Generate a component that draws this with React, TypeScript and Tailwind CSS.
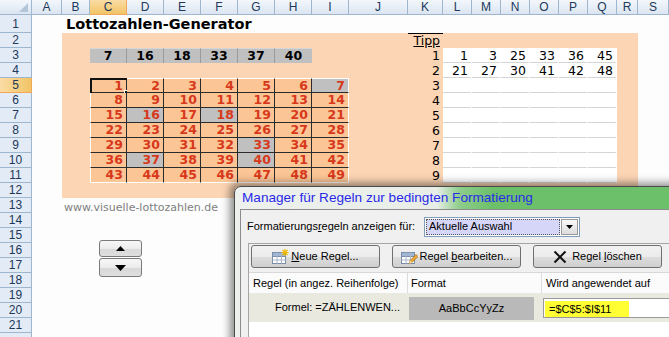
import React from "react";

const colHeads: [string, string][] = [
  ["A", "w-[30px]"],
  ["B", "w-[28px]"],
  ["C", "w-[37px]"],
  ["D", "w-[37px]"],
  ["E", "w-[37px]"],
  ["F", "w-[37px]"],
  ["G", "w-[37px]"],
  ["H", "w-[37px]"],
  ["I", "w-[37px]"],
  ["J", "w-[59px]"],
  ["K", "w-[35px]"],
  ["L", "w-[29px]"],
  ["M", "w-[29px]"],
  ["N", "w-[29px]"],
  ["O", "w-[29px]"],
  ["P", "w-[29px]"],
  ["Q", "w-[29px]"],
  ["R", "w-[21px]"],
  ["S", "w-[31px]"],
];

const drawn = [7, 16, 18, 33, 37, 40];
const tipps = [
  [1, 3, 25, 33, 36, 45],
  [21, 27, 30, 41, 42, 48],
];

function Header() {
  return (
    <div className="flex h-[15px] font-['Liberation_Sans',sans-serif] text-[12px] text-[#20385a]">
      <div className="relative w-[32px] shrink-0 h-[15px] border-r border-b border-[#9eb6ce] bg-[linear-gradient(#f3f7fc,#dbe5f1)]">
        <svg className="absolute right-[3px] bottom-[2px]" width="9" height="9" viewBox="0 0 9 9">
          <polygon points="9,0 9,9 0,9" fill="#b3c5da" />
        </svg>
      </div>
      {colHeads.map(([l, w]) => (
        <div
          key={l}
          className={`${w} shrink-0 h-[15px] flex items-center justify-center border-r border-b ${
            l === "C"
              ? "border-[#f0a95a] bg-[linear-gradient(#fbdca4,#f2c466)]"
              : "border-[#9eb6ce] bg-[linear-gradient(#f3f7fc,#dbe5f1)]"
          }`}
        >
          {l}
        </div>
      ))}
    </div>
  );
}

function RowHeaders() {
  const rows = Array.from({ length: 22 }, (_, i) => i + 1);
  return (
    <div className="w-[32px] shrink-0 flex flex-col font-['Liberation_Sans',sans-serif] text-[12px] text-[#20385a]">
      {rows.map((n) => (
        <div
          key={n}
          className={`${n === 1 ? "h-[18px]" : "h-[15px]"} shrink-0 flex items-center justify-center border-r border-b ${
            n === 5
              ? "border-[#f0a95a] bg-[linear-gradient(90deg,#fbdca4,#f2c466)]"
              : "border-[#9eb6ce] bg-[#e3ebf6]"
          }`}
        >
          {n < 22 ? n : ""}
        </div>
      ))}
    </div>
  );
}

function NumberGrid() {
  const gray = new Set([7, 16, 18, 33, 37, 40]);
  const cells = Array.from({ length: 49 }, (_, i) => i + 1);
  return (
    <div className="[grid-area:5/3/12/10] grid grid-cols-7 grid-rows-7">
      {cells.map((n) => {
        const i = n - 1;
        const r = Math.floor(i / 7);
        const c = i % 7;
        return (
          <div
            key={n}
            className={`relative flex items-center justify-end pr-[3px] pt-[1px] text-[12.5px] font-bold text-[#d8381a] leading-none border-r border-b ${
              gray.has(n) ? "bg-[#c0c0c0]" : "bg-[#fbc596]"
            } ${c < 6 ? "border-r-[#2b2b2b]" : "border-r-white"} ${
              r < 6 ? "border-b-[#2b2b2b]" : "border-b-white"
            } ${c === 0 ? "border-l border-l-white" : ""} ${r === 0 ? "border-t border-t-white" : ""}`}
          >
            {n}
            {n === 1 && (
              <>
                <div className="absolute left-[-1px] top-[-1px] w-[39px] h-[17px] border-2 border-[#111]" />
                <div className="absolute right-[-4px] bottom-[-4px] w-[6px] h-[6px] bg-[#111] border border-white" />
              </>
            )}
          </div>
        );
      })}
    </div>
  );
}

function Body() {
  return (
    <div className="grid grid-cols-[30px_28px_repeat(7,37px)_59px_35px_repeat(6,29px)_21px_31px] grid-rows-[18px_repeat(21,15px)] bg-[#fcfdfc]">
      {/* title */}
      <div className="[grid-area:1/2/2/12] pl-[4px] pt-[1px] flex items-center text-[14.5px] font-bold leading-none">
        Lottozahlen-Generator
      </div>
      {/* peach background */}
      <div className="[grid-area:2/2/13/19] bg-[#fcd5b4]" />
      {/* drawn numbers */}
      <div className="[grid-area:3/3/4/9] grid grid-cols-6">
        {drawn.map((n, i) => (
          <div
            key={n}
            className={`bg-[#c0c0c0] border-t border-t-[#d6d6d6] flex items-center justify-center text-[12.5px] font-bold leading-none ${
              i < 5 ? "border-r border-r-[#9a9a9a]" : ""
            }`}
          >
            {n}
          </div>
        ))}
      </div>
      <NumberGrid />
      {/* Tipp column K */}
      <div className="[grid-area:2/11/12/12] flex flex-col text-[12.5px] leading-none">
        <div className="h-[15px] border-t border-black flex items-center justify-end pr-[3px] underline">Tipp</div>
        {[1, 2, 3, 4, 5, 6, 7, 8, 9].map((n) => (
          <div key={n} className="h-[15px] flex items-center justify-end pr-[3px] pt-[2px]">
            {n}
          </div>
        ))}
      </div>
      {/* Tipp white area */}
      <div className="[grid-area:3/12/12/18] grid grid-cols-6 grid-rows-9 bg-white">
        {Array.from({ length: 54 }, (_, i) => {
          const r = Math.floor(i / 6);
          const c = i % 6;
          const v = r < 2 ? tipps[r][c] : null;
          return (
            <div
              key={i}
              className="flex items-center justify-end pr-[2px] pt-[2px] text-[12.5px] leading-none border-b border-b-[#d4d4d4] border-r-2 border-r-white"
            >
              {v}
            </div>
          );
        })}
      </div>
      {/* url */}
      <div className="[grid-area:13/2/14/11] pl-[2px] pt-[3px] flex items-center text-[11px] text-[#808080] leading-none">
        www.visuelle-lottozahlen.de
      </div>
      {/* spinner */}
      <div className="[grid-area:15/3/19/6] ml-[9px] mt-[12px] flex flex-col gap-[1px]">
        <div className="w-[43px] h-[17px] rounded-[3px] border border-[#7a7a7a] bg-[linear-gradient(#f7f7f7_0%,#ececec_50%,#d9d9d9_51%,#dedede_100%)] flex items-center justify-center">
          <svg width="9" height="5" viewBox="0 0 9 5">
            <polygon points="4.5,0 9,5 0,5" fill="#000" />
          </svg>
        </div>
        <div className="w-[43px] h-[19px] rounded-[3px] border border-[#7a7a7a] bg-[linear-gradient(#f7f7f7_0%,#ececec_50%,#d9d9d9_51%,#dedede_100%)] flex items-center justify-center">
          <svg width="11" height="6" viewBox="0 0 11 6">
            <polygon points="0,0 11,0 5.5,6" fill="#000" />
          </svg>
        </div>
      </div>
    </div>
  );
}

function TableIcon({ pencil, star }: { pencil?: boolean; star?: boolean }) {
  return (
    <svg width="17" height="16" viewBox="0 0 17 16">
      <rect x="0.5" y="3.5" width="13" height="11" fill="#fff" stroke="#7b8ea8" />
      <rect x="1" y="4" width="12" height="3" fill="#9fb6d6" />
      <line x1="0.5" y1="7.5" x2="13.5" y2="7.5" stroke="#7b8ea8" />
      <line x1="0.5" y1="11" x2="13.5" y2="11" stroke="#a8b6c8" />
      <line x1="5" y1="3.5" x2="5" y2="14.5" stroke="#a8b6c8" />
      <line x1="9.5" y1="3.5" x2="9.5" y2="14.5" stroke="#a8b6c8" />
      {star && (
        <g stroke="#f0b800" strokeWidth="1.2">
          <line x1="13" y1="0" x2="13" y2="7" />
          <line x1="9.5" y1="3.5" x2="16.5" y2="3.5" />
          <line x1="10.5" y1="1" x2="15.5" y2="6" />
          <line x1="15.5" y1="1" x2="10.5" y2="6" />
        </g>
      )}
      {pencil && (
        <g>
          <polygon points="8,15 9,11.5 15,5.5 17,7.5 11,13.5" fill="#f0a830" stroke="#8a5a10" strokeWidth="0.6" />
          <polygon points="8,15 9,11.5 11,13.5" fill="#f5deb0" />
        </g>
      )}
    </svg>
  );
}

function Btn({ children, icon }: { children: React.ReactNode; icon: React.ReactNode }) {
  return (
    <div className="w-[129px] h-[23px] shrink-0 rounded-[3px] border border-[#707070] bg-[linear-gradient(#f2f2f2_0%,#ebebeb_50%,#dddddd_51%,#cfcfcf_100%)] flex items-center justify-center gap-[2px]">
      {icon}
      <span>{children}</span>
    </div>
  );
}

function Dialog() {
  return (
    <div className="absolute left-[234px] top-[186px] w-[460px] h-[170px] rounded-tl-[7px] border border-[#4a4a4a] shadow-[-4px_-3px_8px_rgba(0,0,0,0.45)] bg-[linear-gradient(90deg,#eef1ee_0%,#e8eee7_44%,#8fcd8c_49%,#6dc06a_56%,#6dc06a_100%)] font-['Liberation_Sans',sans-serif] overflow-hidden">
      <div className="h-[22px] pl-[7px] flex items-center text-[13.6px] text-[#2a2ae8] leading-none">
        Manager für Regeln zur bedingten Formatierung
      </div>
      <div className="ml-[5px] h-[200px] border border-[#8b8b8b] bg-[#f0f0f0] text-[11px] text-black leading-none">
        <div className="h-[33px] flex items-center pl-[6px]">
          <span className="w-[177px] shrink-0">
            Formatierungs<span className="underline">r</span>egeln anzeigen für:
          </span>
          <div className="h-[20px] w-[156px] shrink-0 border border-[#7f9db9] bg-white flex p-[1px]">
            <div className="flex-1 bg-[#d6d6f8] flex items-center pl-[2px] border border-dotted border-[#555]">
              Aktuelle Auswahl
            </div>
            <div className="w-[17px] ml-[1px] border border-[#9a9a9a] bg-[linear-gradient(#fafafa,#dcdcdc)] flex items-center justify-center">
              <svg width="7" height="4" viewBox="0 0 7 4">
                <polygon points="0,0 7,0 3.5,4" fill="#000" />
              </svg>
            </div>
          </div>
        </div>
        <div className="ml-[7px] h-[200px] border border-[#a5a5a5] bg-white">
          <div className="h-[28px] bg-[#f0f0f0] flex items-start pt-[1px] pl-[2px] gap-[12px]">
            <Btn icon={<TableIcon star />}>
              <span className="underline">N</span>eue Regel...
            </Btn>
            <Btn icon={<TableIcon pencil />}>
              Regel <span className="underline">b</span>earbeiten...
            </Btn>
            <Btn
              icon={
                <svg width="14" height="14" viewBox="0 0 14 14" className="mr-[3px]">
                  <path d="M1.5 1.5 L12.5 12.5 M12.5 1.5 L1.5 12.5" stroke="#111" strokeWidth="2" />
                </svg>
              }
            >
              Regel <span className="underline">l</span>öschen
            </Btn>
          </div>
          <div className="h-[21px] flex border-t border-[#d8d8d8] bg-[#fbfbfb]">
            <div className="w-[159px] shrink-0 border-r border-[#dcdcdc] flex items-center pl-[4px]">
              Regel (in angez. Reihenfolge)
            </div>
            <div className="w-[134px] shrink-0 border-r border-[#dcdcdc] flex items-center pl-[3px]">Format</div>
            <div className="flex-1 flex items-center pl-[4px]">Wird angewendet auf</div>
          </div>
          <div className="h-[29px] flex bg-[#e9e9e0]">
            <div className="w-[160px] shrink-0 flex items-center pl-[26px]">Formel: =ZÄHLENWEN...</div>
            <div className="w-[125px] shrink-0 mt-[4px] h-[23px] bg-[#b9b9b9] flex items-center justify-center">
              AaBbCcYyZz
            </div>
            <div className="ml-[9px] mt-[5px] h-[20px] flex-1 bg-white border border-[#9a9a9a] flex items-end pl-[1px]">
              <div className="h-[16px] w-[84px] bg-[#ffff33] flex items-center pl-[4px]">=$C$5:$I$11</div>
            </div>
          </div>
        </div>
      </div>
    </div>
  );
}

export default function App() {
  return (
    <div className="relative w-[669px] h-[337px] overflow-hidden bg-[#fcfdfc] font-['DejaVu_Sans',sans-serif] text-black">
      <Header />
      <div className="flex">
        <RowHeaders />
        <Body />
      </div>
      <Dialog />
    </div>
  );
}
